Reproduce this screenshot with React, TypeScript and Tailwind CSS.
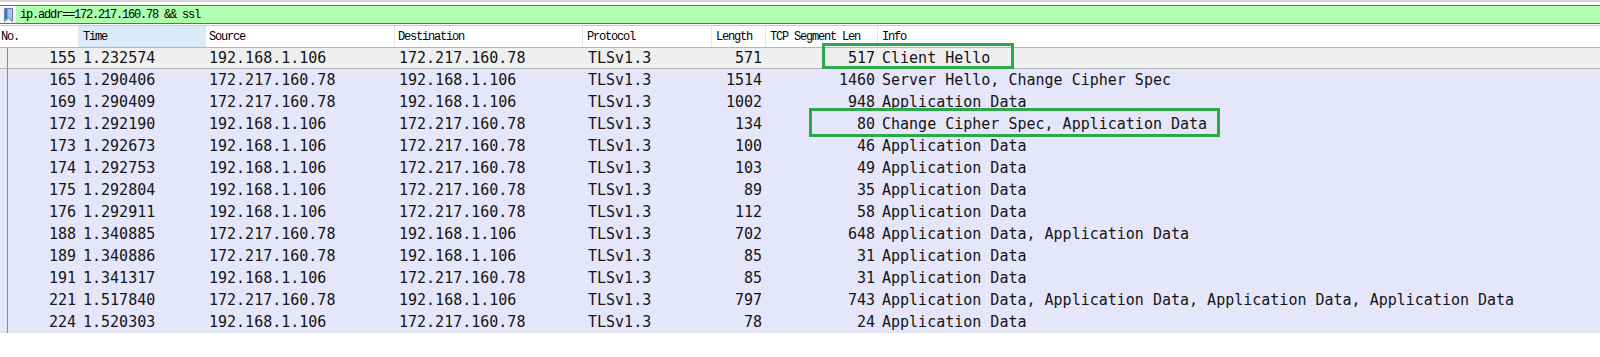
import React from "react";

type Row = [string, string, string, string, string, string, string, string];

const rows: Row[] = [
  ["155", "1.232574", "192.168.1.106", "172.217.160.78", "TLSv1.3", "571", "517", "Client Hello"],
  ["165", "1.290406", "172.217.160.78", "192.168.1.106", "TLSv1.3", "1514", "1460", "Server Hello, Change Cipher Spec"],
  ["169", "1.290409", "172.217.160.78", "192.168.1.106", "TLSv1.3", "1002", "948", "Application Data"],
  ["172", "1.292190", "192.168.1.106", "172.217.160.78", "TLSv1.3", "134", "80", "Change Cipher Spec, Application Data"],
  ["173", "1.292673", "192.168.1.106", "172.217.160.78", "TLSv1.3", "100", "46", "Application Data"],
  ["174", "1.292753", "192.168.1.106", "172.217.160.78", "TLSv1.3", "103", "49", "Application Data"],
  ["175", "1.292804", "192.168.1.106", "172.217.160.78", "TLSv1.3", "89", "35", "Application Data"],
  ["176", "1.292911", "192.168.1.106", "172.217.160.78", "TLSv1.3", "112", "58", "Application Data"],
  ["188", "1.340885", "172.217.160.78", "192.168.1.106", "TLSv1.3", "702", "648", "Application Data, Application Data"],
  ["189", "1.340886", "172.217.160.78", "192.168.1.106", "TLSv1.3", "85", "31", "Application Data"],
  ["191", "1.341317", "192.168.1.106", "172.217.160.78", "TLSv1.3", "85", "31", "Application Data"],
  ["221", "1.517840", "172.217.160.78", "192.168.1.106", "TLSv1.3", "797", "743", "Application Data, Application Data, Application Data, Application Data"],
  ["224", "1.520303", "192.168.1.106", "172.217.160.78", "TLSv1.3", "78", "24", "Application Data"],
];

const cols = "grid grid-cols-[79px_127px_189px_188px_129px_54px_112px_1fr]";
const hdrFont = "font-['Liberation_Mono','DejaVu_Sans_Mono',monospace] text-[12px] tracking-[-1.2px]";
const dataFont = "font-['DejaVu_Sans_Mono','Liberation_Mono',monospace] text-[15px]";

function Bookmark() {
  return (
    <svg width="9" height="14" viewBox="0 0 9 14">
      <path d="M0.5 0.5 H8.5 V13.5 L4.5 10 L0.5 13.5 Z" fill="#a9c3e4" stroke="#5a7fb5" strokeWidth="1" />
      <rect x="1" y="1" width="2.5" height="10" fill="#4d74b3" />
    </svg>
  );
}

export default function App() {
  return (
    <div className="relative w-[1600px] h-[357px] bg-white overflow-hidden text-black">
      <div className="h-[2px] bg-[#d4d4d4]" />
      <div className="h-[3px]" />
      <div className="flex h-[19px] border-y border-[#6a6a6a]">
        <div className="w-[16px] flex items-center justify-center bg-[#f4f4f4]">
          <Bookmark />
        </div>
        <div className={`flex-1 bg-[#afffaf] flex items-center pl-[4px] ${hdrFont}`}>
          ip.addr==172.217.160.78 &amp;&amp; ssl
        </div>
      </div>
      <div className="h-[1px]" />
      <div className="h-[1px] bg-[#c8c8c8]" />
      <div className={`${cols} h-[21px] items-stretch ${hdrFont}`}>
        <div className="flex items-center pl-[1px] border-r border-[#e6e6e6]">No.</div>
        <div className="flex items-center pl-[4px] bg-[#d9eaf8] border-r border-[#e6e6e6]">Time</div>
        <div className="flex items-center pl-[3px] border-r border-[#e6e6e6]">Source</div>
        <div className="flex items-center pl-[3px] border-r border-[#e6e6e6]">Destination</div>
        <div className="flex items-center pl-[4px] border-r border-[#e6e6e6]">Protocol</div>
        <div className="flex items-center pl-[4px] border-r border-[#e6e6e6]">Length</div>
        <div className="flex items-center pl-[4px] border-r border-[#e6e6e6]">TCP Segment Len</div>
        <div className="flex items-center pl-[4px]">Info</div>
      </div>
      <div className={`${dataFont} text-[#141414]`}>
        {rows.map((r, i) => {
          const sel = i === 0;
          return (
            <div
              key={r[0]}
              className={
                sel
                  ? `${cols} h-[22px] bg-[#efefef] border-y border-[#b6b6b6]`
                  : `${cols} h-[22px] bg-[#e6e6fa]`
              }
            >
              <div className="ml-[7px] border-l border-[#8a8a8a] flex items-center justify-end pr-[3px] leading-none">{r[0]}</div>
              <div className="flex items-center pl-[4px] leading-none">{r[1]}</div>
              <div className="flex items-center pl-[3px] leading-none">{r[2]}</div>
              <div className="flex items-center pl-[4px] leading-none">{r[3]}</div>
              <div className="flex items-center pl-[5px] leading-none">{r[4]}</div>
              <div className="flex items-center justify-end pr-[4px] leading-none">{r[5]}</div>
              <div className="flex items-center justify-end pr-[3px] leading-none">{r[6]}</div>
              <div className="flex items-center pl-[4px] leading-none whitespace-nowrap">{r[7]}</div>
            </div>
          );
        })}
      </div>
      <div className="absolute left-[822px] top-[43px] w-[192px] h-[26px] border-[3px] border-[#2aa84a]" />
      <div className="absolute left-[809px] top-[108px] w-[411px] h-[29px] border-[3px] border-[#2aa84a]" />
    </div>
  );
}
